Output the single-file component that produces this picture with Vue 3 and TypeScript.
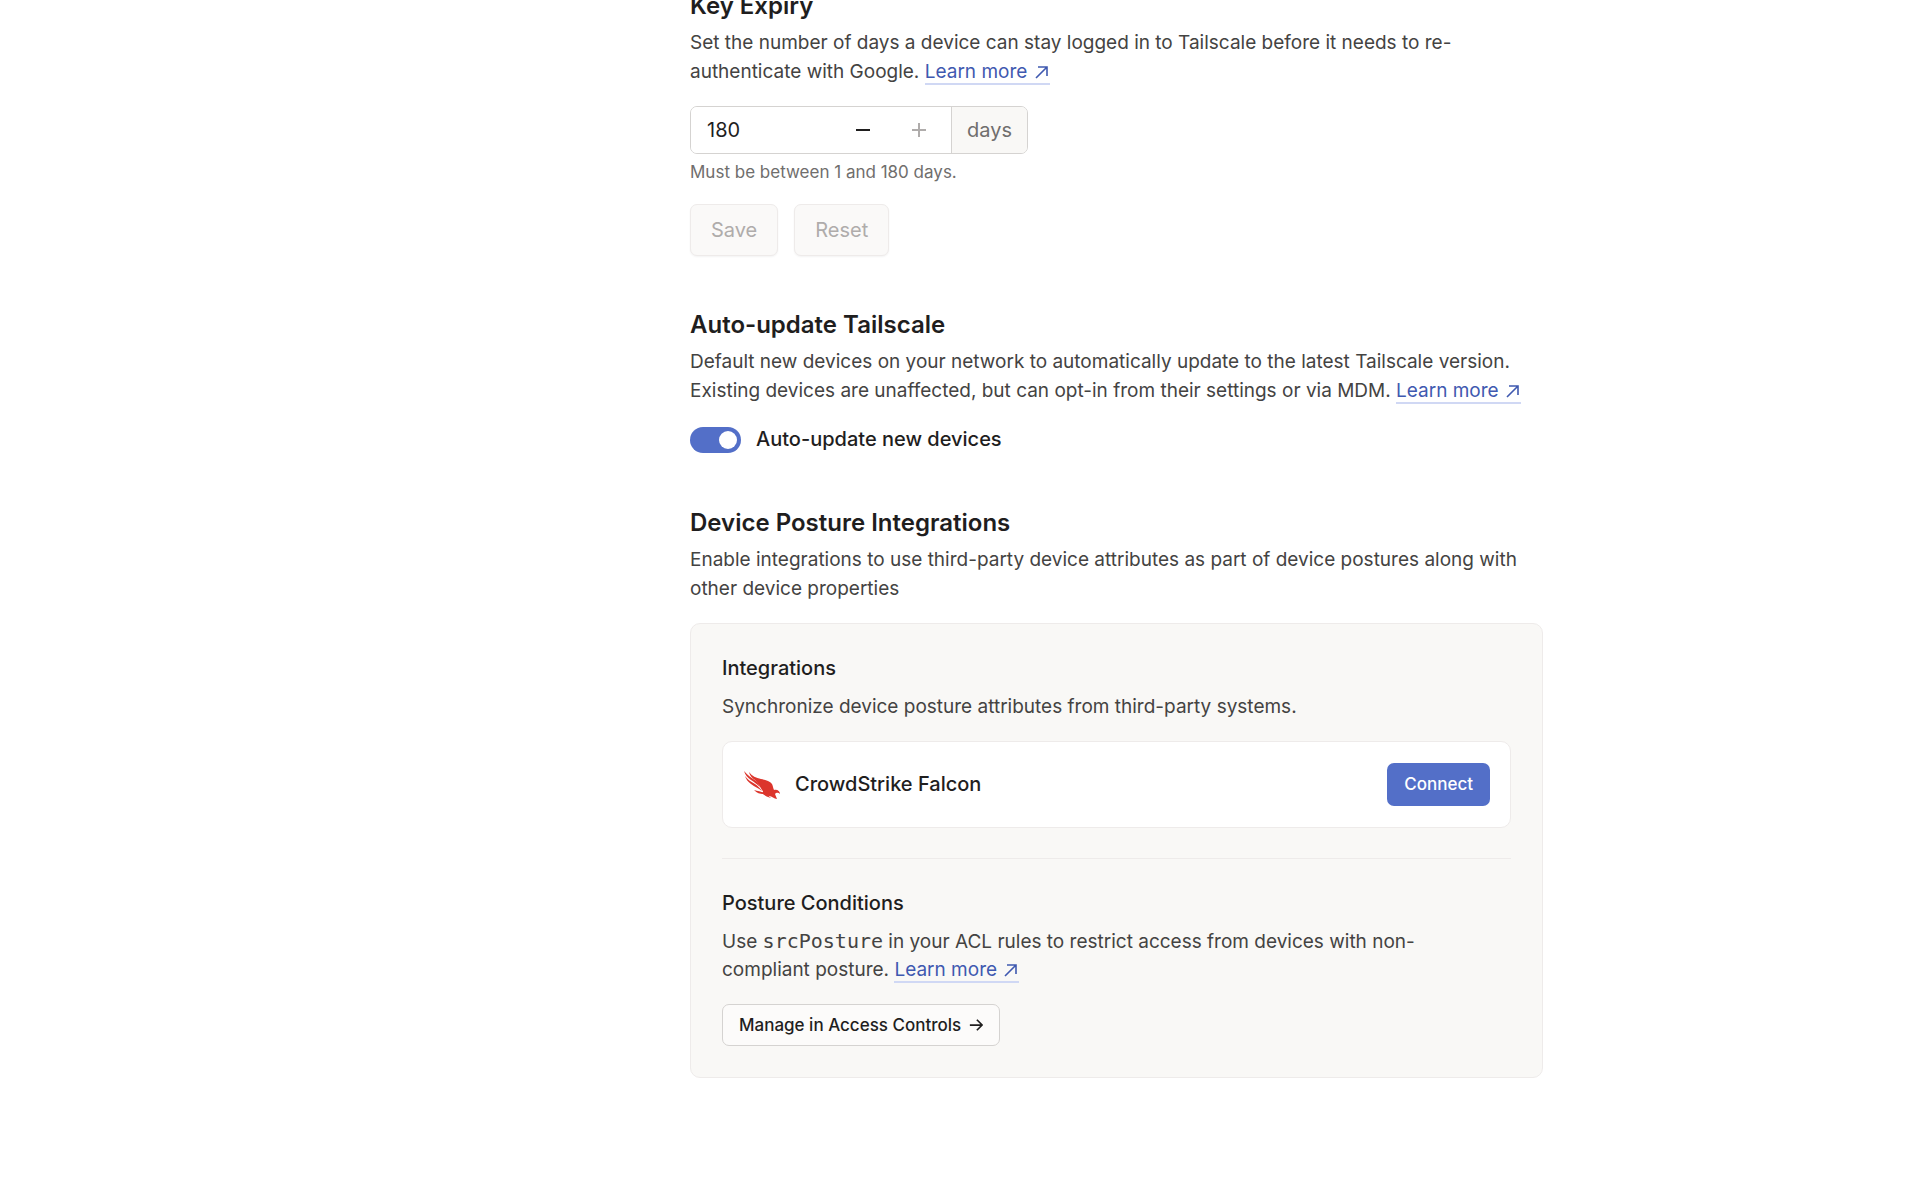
<script setup lang="ts">
import { computed, ref } from 'vue'

const MIN_DAYS = 1
const MAX_DAYS = 180
const savedDays = ref(180)
const days = ref(180)
const autoUpdate = ref(true)

const unchanged = computed(() => days.value === savedDays.value)

function step(delta: number) {
  days.value = Math.min(MAX_DAYS, Math.max(MIN_DAYS, days.value + delta))
}
</script>

<template>
  <main class="page">
    <div class="content">
      <section class="section">
        <h2>Key Expiry</h2>
        <p>
          Set the number of days a device can stay logged in to Tailscale before it needs to re-authenticate with
          Google.
          <a class="link" href="#key-expiry">Learn more <svg class="arrow" viewBox="0 0 14 14" aria-hidden="true"><path d="M1 13 12 2M3 2h9v9" /></svg></a>
        </p>
        <div class="stepper">
          <input id="days" v-model.number="days" type="text" inputmode="numeric" aria-label="Key expiry in days" />
          <button type="button" class="step" aria-label="Decrease" :disabled="days <= MIN_DAYS" @click="step(-1)">
            <svg viewBox="0 0 16 16" aria-hidden="true"><path d="M1 8h14" /></svg>
          </button>
          <button type="button" class="step" aria-label="Increase" :disabled="days >= MAX_DAYS" @click="step(1)">
            <svg viewBox="0 0 16 16" aria-hidden="true"><path d="M1 8h14M8 1v14" /></svg>
          </button>
          <label class="unit" for="days">days</label>
        </div>
        <p class="hint">Must be between 1 and 180 days.</p>
        <div class="actions">
          <button type="button" class="action" :disabled="unchanged" @click="savedDays = days">Save</button>
          <button type="button" class="action" :disabled="unchanged" @click="days = savedDays">Reset</button>
        </div>
      </section>

      <section class="section">
        <h2>Auto-update Tailscale</h2>
        <p>
          Default new devices on your network to automatically update to the latest Tailscale version. Existing devices
          are unaffected, but can opt-in from their settings or via MDM.
          <a class="link" href="#auto-update">Learn more <svg class="arrow" viewBox="0 0 14 14" aria-hidden="true"><path d="M1 13 12 2M3 2h9v9" /></svg></a>
        </p>
        <label class="toggle">
          <input v-model="autoUpdate" type="checkbox" role="switch" />
          <span>Auto-update new devices</span>
        </label>
      </section>

      <section class="section">
        <h2>Device Posture Integrations</h2>
        <p>
          Enable integrations to use third-party device attributes as part of device postures along with other device
          properties
        </p>
        <div class="panel">
          <h3>Integrations</h3>
          <p>Synchronize device posture attributes from third-party systems.</p>
          <div class="integration">
            <svg class="falcon" viewBox="0 0 38 30" aria-hidden="true">
              <path d="M1 1C4 5 9 8 13 11C15 13 16 15 17 17C14 14 11 12 8 10C5 8 2 5 1 1Z" />
              <path d="M6 2C9 6 13 8 18 9C23 10 27 11 29 14C30 16 30 18 31 20C34 19 37 21 37 24C35 22 33 23 32 24L34 29C31 29 29 26 26 26C23 26 21 24 18 23C20 23 21 22 19 20C17 17 15 13 12 10C9 8 7 6 6 2Z" />
              <path d="M2 6C4 9 8 12 12 14C15 16 17 18 19 21C15 18 12 17 8 14C5 12 3 9 2 6Z" />
              <path d="M11 20C15 21 19 22 22 23L28 28C25 27 22 26 20 24C17 24 14 23 11 20Z" />
            </svg>
            <span class="name">CrowdStrike Falcon</span>
            <button type="button" class="connect">Connect</button>
          </div>
          <hr />
          <h3>Posture Conditions</h3>
          <p class="conditions">
            Use <code>srcPosture</code> in your ACL rules to restrict access from devices with non-compliant posture.
            <a class="link" href="#posture">Learn more <svg class="arrow" viewBox="0 0 14 14" aria-hidden="true"><path d="M1 13 12 2M3 2h9v9" /></svg></a>
          </p>
          <a class="manage" href="#access-controls">Manage in Access Controls <svg viewBox="0 0 16 16" aria-hidden="true"><path d="M1 8h14M9 2l6 6-6 6" /></svg></a>
        </div>
      </section>
    </div>
  </main>
</template>

<style>
body {
  margin: 0;
  background: #fff;
}
</style>

<style scoped>
* {
  box-sizing: border-box;
}

.page {
  max-width: 1166px;
  margin: 0 auto;
  overflow: hidden;
  font-family: Inter, "Liberation Sans", sans-serif;
  font-size: 20px;
  line-height: 29px;
  color: #444342;
}

.content {
  max-width: 853px;
  margin: -12px 0 0 auto;
}

.section {
  margin-bottom: 51px;
}

h2,
h3,
p {
  margin: 0;
}

h2 {
  margin-bottom: 4px;
  font-size: 24px;
  font-weight: 600;
  line-height: 36px;
  color: #1f1e1e;
}

h3 {
  margin-bottom: 10px;
  font-size: 20px;
  font-weight: 500;
  color: #1f1e1e;
}

p {
  font-size: 19px;
}

.link {
  border-bottom: 2px solid #d0d8f4;
  color: #3f59b0;
  text-decoration: none;
  white-space: nowrap;
}

.arrow {
  width: 14px;
  height: 14px;
  margin: 0 1px 0 2px;
  fill: none;
  stroke: currentColor;
  stroke-width: 1.6;
  vertical-align: -1px;
}

button,
input {
  margin: 0;
  font: inherit;
}

.stepper {
  display: flex;
  max-width: 338px;
  height: 48px;
  margin-top: 20px;
  overflow: hidden;
  border: 1px solid #d5d3d1;
  border-radius: 7px;
}

.stepper input {
  flex: 1;
  min-width: 0;
  padding: 0 16px;
  border: 0;
  background: #fff;
  color: #1f1e1e;
  outline: none;
}

.step {
  display: grid;
  place-items: center;
  width: 56px;
  padding: 0;
  border: 0;
  background: #fff;
  color: #1f1e1e;
}

.step:last-of-type {
  width: 60px;
  padding-right: 4px;
}

.step:disabled {
  color: #afacab;
}

.step svg {
  width: 16px;
  height: 16px;
  fill: none;
  stroke: currentColor;
  stroke-width: 2;
}

.unit {
  padding: 9px 15px;
  border-left: 1px solid #d5d3d1;
  background: #f9f8f6;
  color: #706e6d;
}

.hint {
  margin-top: 6px;
  font-size: 17px;
  line-height: 24px;
  color: #706e6d;
}

.actions {
  display: flex;
  gap: 16px;
  margin-top: 20px;
}

.action {
  height: 52px;
  padding: 0 20px;
  border: 1px solid #eeebea;
  border-radius: 7px;
  background: #faf9f8;
  box-shadow: 0 1px 2px rgb(0 0 0 / 5%);
  color: #afacab;
}

.toggle {
  display: flex;
  align-items: center;
  gap: 15px;
  margin-top: 20px;
  color: #1f1e1e;
  font-weight: 500;
}

.toggle input {
  display: flex;
  align-items: center;
  width: 51px;
  height: 26px;
  padding: 0 4px;
  appearance: none;
  border-radius: 13px;
  background: #afacab;
}

.toggle input::before {
  width: 18px;
  height: 18px;
  border-radius: 50%;
  background: #fff;
  content: "";
}

.toggle input:checked {
  justify-content: flex-end;
  background: #536fc8;
}

.panel {
  margin-top: 20px;
  padding: 30px 31px 31px;
  border: 1px solid #eeebea;
  border-radius: 10px;
  background: #f9f8f6;
}

.panel p {
  line-height: 28px;
}

.integration {
  display: flex;
  align-items: center;
  gap: 14px;
  margin-top: 20px;
  padding: 21px 20px;
  border: 1px solid #eeebea;
  border-radius: 10px;
  background: #fff;
}

.falcon {
  width: 38px;
  height: 30px;
  fill: #dc352c;
}

.name {
  flex: 1;
  color: #1f1e1e;
  font-weight: 500;
}

.connect {
  height: 43px;
  padding: 0 17px;
  border: 0;
  border-radius: 7px;
  background: #536fc8;
  color: #fff;
  font-size: 17px;
  font-weight: 500;
}

hr {
  height: 1px;
  margin: 30px 0;
  border: 0;
  background: #eeebea;
}

.conditions {
  max-width: 740px;
}

code {
  font-family: "DejaVu Sans Mono", monospace;
  font-size: 20px;
  line-height: 1;
}

.manage {
  display: inline-flex;
  align-items: center;
  gap: 8px;
  height: 42px;
  margin-top: 20px;
  padding: 0 16px;
  border: 1px solid #d5d3d1;
  border-radius: 7px;
  background: #fcfbfa;
  color: #1f1e1e;
  font-size: 17px;
  font-weight: 500;
  text-decoration: none;
  vertical-align: top;
}

.manage svg {
  width: 14px;
  height: 14px;
  fill: none;
  stroke: currentColor;
  stroke-width: 2;
}
</style>
